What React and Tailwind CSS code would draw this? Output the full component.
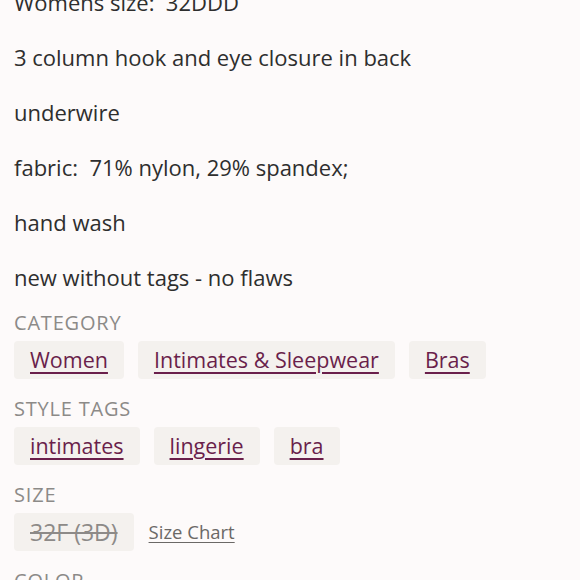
import React from "react";

const Chip = ({ children, muted }) => (
  <span className="inline-flex items-center h-[38px] px-4 rounded-[4px] bg-[#f4f1ee]">
    <span
      className={
        muted
          ? "text-[#8d8a88] text-[23px] line-through decoration-[1.5px]"
          : "text-[#6a1f4b] underline decoration-[1.5px] underline-offset-[4px]"
      }
    >
      {children}
    </span>
  </span>
);

const Label = ({ children }) => (
  <div className="h-6 leading-6 text-[20px] tracking-[0.8px] text-[#8c8a88]">{children}</div>
);

export default function App() {
  const lines = [
    "Womens size:  32DDD",
    "3 column hook and eye closure in back",
    "underwire",
    "fabric:  71% nylon, 29% spandex;",
    "hand wash",
    "new without tags - no flaws",
  ];
  return (
    <div
      className="w-[580px] h-[580px] overflow-hidden bg-[#fdfafa] text-[#2e2e2e]"
      style={{ fontFamily: "'Open Sans', Lato, sans-serif" }}
    >
      <div className="px-[14px] mt-[-25px]">
        {lines.map((l, i) => (
          <p key={i} className="h-[55px] leading-[55px] text-[22px] whitespace-pre">
            {l}
          </p>
        ))}
        <div className="mt-[6px] flex flex-col">
          <Label>CATEGORY</Label>
          <div className="mt-[6px] flex gap-[14px] text-[21.5px]">
            <Chip>Women</Chip>
            <Chip>Intimates &amp; Sleepwear</Chip>
            <Chip>Bras</Chip>
          </div>
          <div className="mt-[18px]">
            <Label>STYLE TAGS</Label>
          </div>
          <div className="mt-[6px] flex gap-[14px] text-[21.5px]">
            <Chip>intimates</Chip>
            <Chip>lingerie</Chip>
            <Chip>bra</Chip>
          </div>
          <div className="mt-[18px]">
            <Label>SIZE</Label>
          </div>
          <div className="mt-[6px] flex items-center gap-[15px] text-[21.5px]">
            <Chip muted>32F (3D)</Chip>
            <span className="text-[18.5px] text-[#6b6866] underline decoration-[1px] underline-offset-[3px]">
              Size Chart
            </span>
          </div>
          <div className="mt-[18px]">
            <Label>COLOR</Label>
          </div>
        </div>
      </div>
    </div>
  );
}
